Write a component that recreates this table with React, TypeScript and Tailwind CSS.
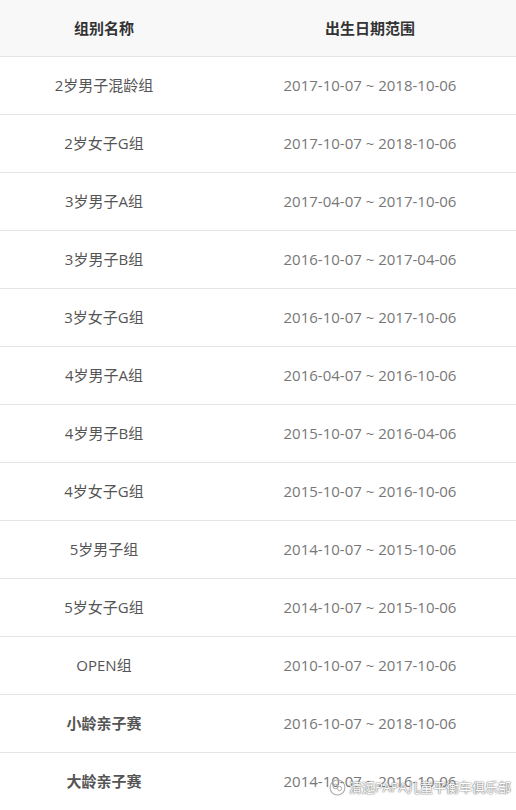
import React from "react";

const rows: { name: string; range: string; bold?: boolean }[] = [
  { name: "2岁男子混龄组", range: "2017-10-07 ~ 2018-10-06" },
  { name: "2岁女子G组", range: "2017-10-07 ~ 2018-10-06" },
  { name: "3岁男子A组", range: "2017-04-07 ~ 2017-10-06" },
  { name: "3岁男子B组", range: "2016-10-07 ~ 2017-04-06" },
  { name: "3岁女子G组", range: "2016-10-07 ~ 2017-10-06" },
  { name: "4岁男子A组", range: "2016-04-07 ~ 2016-10-06" },
  { name: "4岁男子B组", range: "2015-10-07 ~ 2016-04-06" },
  { name: "4岁女子G组", range: "2015-10-07 ~ 2016-10-06" },
  { name: "5岁男子组", range: "2014-10-07 ~ 2015-10-06" },
  { name: "5岁女子G组", range: "2014-10-07 ~ 2015-10-06" },
  { name: "OPEN组", range: "2010-10-07 ~ 2017-10-06" },
  { name: "小龄亲子赛", range: "2016-10-07 ~ 2018-10-06", bold: true },
  { name: "大龄亲子赛", range: "2014-10-07 ~ 2016-10-06", bold: true },
];

const font = {
  fontFamily: '"Open Sans", "Noto Sans CJK SC", sans-serif',
};

export default function App() {
  return (
    <div
      className="relative w-[516px] h-[810px] overflow-hidden bg-white text-[15px]"
      style={font}
    >
      <div className="grid grid-cols-[208px_1fr] h-[57px] bg-[#f8f8f8] border-b border-[#e5e5e5] items-center font-bold text-[#333]">
        <div className="text-center">组别名称</div>
        <div className="text-center pl-4">出生日期范围</div>
      </div>
      {rows.map((r) => (
        <div
          key={r.name}
          className="grid grid-cols-[208px_1fr] h-[58px] border-b border-[#e5e5e5] items-center"
        >
          <div
            className={
              r.bold
                ? "text-center font-bold text-[#555]"
                : "text-center text-[#555]"
            }
          >
            {r.name}
          </div>
          <div className="text-center pl-4 text-[#777]">{r.range}</div>
        </div>
      ))}

      {/* wechat watermark */}
      <div className="absolute left-[329px] top-[778px] flex items-center gap-[3px] text-[13px] leading-[18px] text-white [text-shadow:0_0_2px_#777,0_0_1px_#555]">
        <svg width="17" height="17" viewBox="0 0 16 16" fill="none">
          <circle cx="8" cy="8" r="7" stroke="#aaa" strokeWidth="1" />
          <circle cx="6" cy="7" r="2.2" stroke="#aaa" strokeWidth="0.9" />
          <circle cx="10" cy="9" r="2" stroke="#aaa" strokeWidth="0.9" />
        </svg>
        <span>清远PAPA儿童平衡车俱乐部</span>
      </div>
    </div>
  );
}
